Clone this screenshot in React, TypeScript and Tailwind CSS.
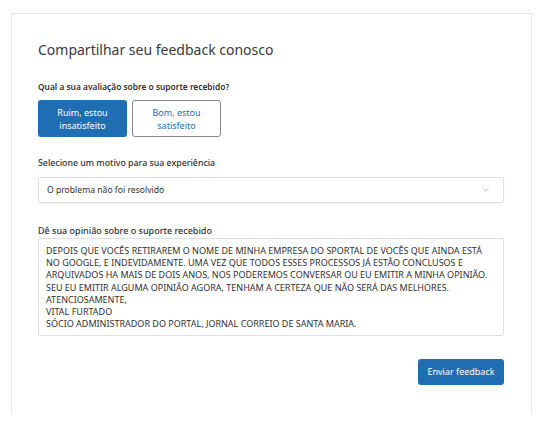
import { ChevronDown } from "lucide-react";

const opinion = [
  "DEPOIS QUE VOCÊS RETIRAREM O NOME DE MINHA EMPRESA DO SPORTAL DE VOCÊS QUE AINDA ESTÁ",
  "NO GOOGLE, E INDEVIDAMENTE. UMA VEZ QUE TODOS ESSES PROCESSOS JÁ ESTÃO CONCLUSOS E",
  "ARQUIVADOS HA MAIS DE DOIS ANOS, NOS PODEREMOS CONVERSAR OU EU EMITIR A MINHA OPINIÃO.",
  "SEU EU EMITIR ALGUMA OPINIÃO AGORA, TENHAM A CERTEZA QUE NÃO SERÁ DAS MELHORES.",
  "ATENCIOSAMENTE,",
  "VITAL FURTADO",
  "SÓCIO ADMINISTRADOR DO PORTAL, JORNAL CORREIO DE SANTA MARIA.",
];

export default function App() {
  return (
    <div className="h-[434px] w-[544px] overflow-hidden bg-white pl-[11px] pt-[13px] font-['Noto_Sans',sans-serif] text-[#323130]">
      <div className="h-[401px] w-[521px] border border-b-0 border-[#e6e6e6] px-[26px] pt-[26px]">
        <h1 className="text-[14px] leading-[20px] text-[#3a3a3a]">Compartilhar seu feedback conosco</h1>

        <p className="mt-[20px] text-[8.4px] font-semibold leading-[14px]">Qual a sua avaliação sobre o suporte recebido?</p>
        <div className="mt-[6px] flex gap-[5px]">
          <button className="flex h-[37px] w-[89px] flex-col items-center justify-center rounded-[3px] bg-[#1f6db3] text-[9px] leading-[13px] text-white">
            <span>Ruim, estou</span>
            <span>insatisfeito</span>
          </button>
          <button className="flex h-[37px] w-[89px] flex-col items-center justify-center rounded-[3px] border border-[#8a8886] bg-white text-[9px] leading-[13px] text-[#1f6db3]">
            <span>Bom, estou</span>
            <span>satisfeito</span>
          </button>
        </div>

        <p className="mt-[19px] text-[8.8px] font-medium leading-[14px]">Selecione um motivo para sua experiência</p>
        <div className="mt-[7px] flex h-[26px] w-[466px] items-center justify-between rounded-[2px] border border-[#e1dfdd] pl-[8px] pr-[12px] shadow-[0_1px_2px_rgba(0,0,0,0.06)]">
          <span className="text-[8.6px]">O problema não foi resolvido</span>
          <ChevronDown className="h-[10px] w-[10px] text-[#8a8886]" strokeWidth={1.5} />
        </div>

        <p className="mt-[21px] text-[9px] font-medium leading-[14px]">Dê sua opinião sobre o suporte recebido</p>
        <div className="h-[98px] w-[466px] rounded-[2px] border border-[#e1dfdd] px-[7px] pt-[6px] text-[9px] leading-[12.2px] text-[#323130]">
          {opinion.map((line) => (
            <div key={line} className="whitespace-nowrap">{line}</div>
          ))}
        </div>

        <div className="mt-[23px] flex w-[466px] justify-end">
          <button className="h-[26px] w-[86px] rounded-[3px] bg-[#1f6db3] text-[9px] text-white">Enviar feedback</button>
        </div>
      </div>
    </div>
  );
}
